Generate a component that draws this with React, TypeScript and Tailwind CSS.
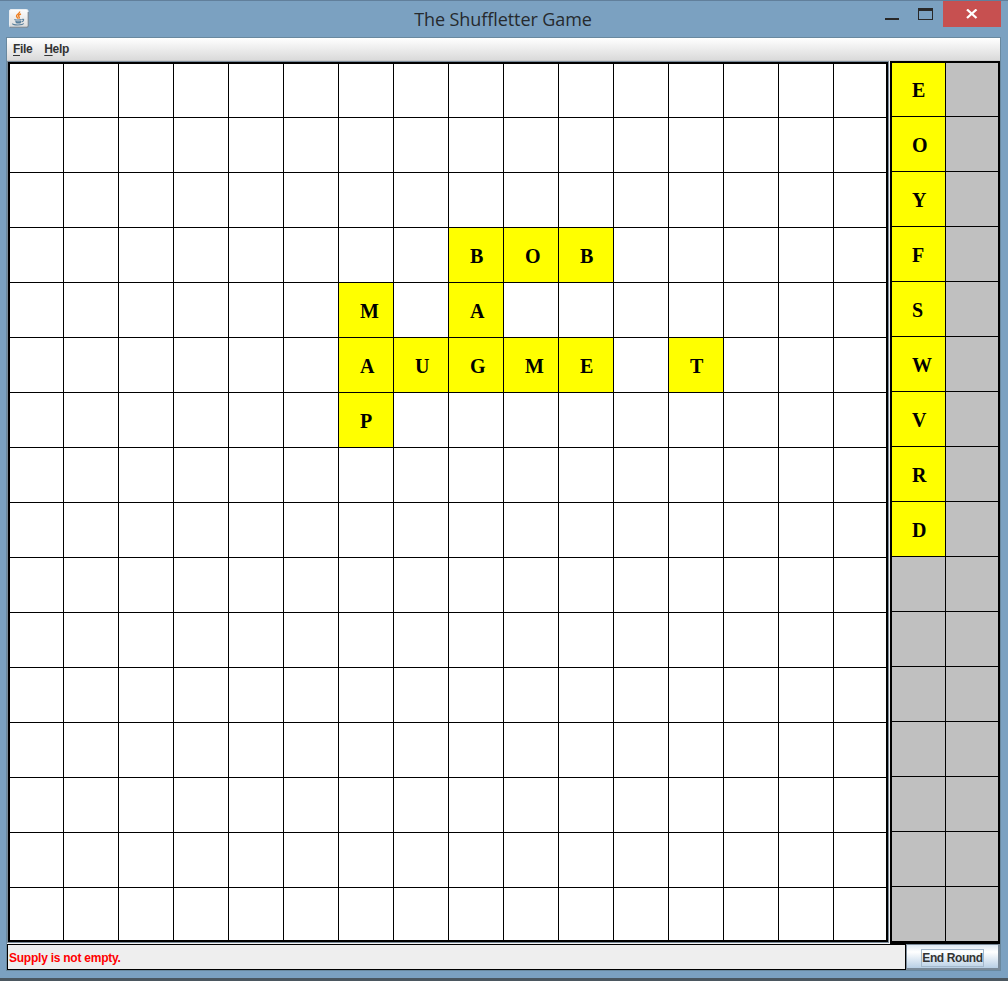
const placed: Record<string, string> = {
  '3-8': 'B', '3-9': 'O', '3-10': 'B',
  '4-6': 'M', '4-8': 'A',
  '5-6': 'A', '5-7': 'U', '5-8': 'G', '5-9': 'M', '5-10': 'E', '5-12': 'T',
  '6-6': 'P',
};

const rack = ['E', 'O', 'Y', 'F', 'S', 'W', 'V', 'R', 'D'];
const range = (n: number) => Array.from({ length: n }, (_, i) => i);

function JavaIcon() {
  return (
    <svg width="20" height="20" viewBox="0 0 20 20" fill="none">
      <defs>
        <linearGradient id="tile" x1="0" y1="0" x2="0" y2="1">
          <stop offset="0" stopColor="#fdfdfd" />
          <stop offset="1" stopColor="#dcdcdc" />
        </linearGradient>
      </defs>
      <rect x="0.5" y="0.5" width="18.5" height="17.6" rx="1.5" fill="url(#tile)" stroke="#e9eef2" />
      <path d="M1 18.2H18.5L19.2 17V3" stroke="#5d6b78" strokeWidth="0.9" />
      <path d="M10.6 2.5C11.3 4.6 7 5.3 7.5 7.2C7.7 8.2 8.7 8.6 8.8 9.6M12 5C9.2 6 9.1 6.9 10 7.7C10.6 8.3 10.3 9 9.8 9.6" stroke="#ee7f22" strokeWidth="1.4" />
      <path d="M5.4 10.4C7 11.2 11.2 11.1 12.6 10.4M6.4 12.2C8 12.9 10.7 12.8 12 12.2M13 10.4C15.4 9.6 15.2 12.1 12.6 12.9M3.4 14.6C3.4 16.4 14 16.4 14.6 14.4M6.7 13.6C8.2 14.1 10.7 14.1 12 13.6" stroke="#587f9c" strokeWidth="1.1" />
    </svg>
  );
}

function TitleBar() {
  return (
    <header className="relative flex h-[37px] shrink-0 items-start border-t border-[#617f9b]">
      <div className="pt-2 pl-[9px]">
        <JavaIcon />
      </div>
      <h1 className="absolute inset-x-0 top-[6px] pr-[2px] text-center font-['Open_Sans','Noto_Sans',sans-serif] text-[18px] leading-6 tracking-[-0.08px] text-[#262a2e]">
        The Shuffletter Game
      </h1>
      <div className="ml-auto flex pr-[7px]">
        <svg width="58" height="26" viewBox="0 0 58 26" shapeRendering="crispEdges">
          <rect x="0" y="17" width="14" height="2" fill="#282828" />
          <path d="M33 7h15v12H33zM34 10v8h13v-8z" fill="#282828" fillRule="evenodd" />
        </svg>
        <div className="flex h-[26px] w-[58px] items-center justify-center bg-[#c75050]">
          <svg width="12" height="10" viewBox="0 0 12 10" className="-ml-px">
            <path d="M1 0.5L10.5 9M10.5 0.5L1 9" stroke="#fff" strokeWidth="2.3" />
          </svg>
        </div>
      </div>
    </header>
  );
}

function MenuBar() {
  return (
    <nav className="flex h-[23px] shrink-0 items-start gap-3 border-b border-[#cccccc] bg-linear-to-b from-white to-[#dadada] pt-[3px] pl-[6px] text-[12px] leading-4 font-bold tracking-[-0.35px] text-[#333]">
      <span><span className="underline underline-offset-2">F</span>ile</span>
      <span><span className="underline underline-offset-2">H</span>elp</span>
    </nav>
  );
}

function Board() {
  return (
    <div className="mt-px ml-px grid h-[880px] w-[880px] shrink-0 grid-cols-[53px_repeat(14,54px)_52px] grid-rows-[53px_repeat(14,54px)_52px] gap-px border-2 border-black bg-black shadow-[0_0_0_1px_#7a8a99]">
      {range(256).map((i) => {
        const letter = placed[`${Math.floor(i / 16)}-${i % 16}`];
        return (
          <div
            key={i}
            className={`pt-[18px] pl-[21px] text-[20px] leading-5 font-bold ${letter ? 'bg-[#ffff00]' : 'bg-white'}`}
          >
            {letter}
          </div>
        );
      })}
    </div>
  );
}

function Rack() {
  return (
    <div className="relative ml-[2px] grid h-[883px] w-[110px] shrink-0 grid-cols-[53px_52px] grid-rows-[53px_repeat(14,54px)_54px] gap-px border-2 border-b-3 border-black bg-black">
      {range(32).map((i) => {
        const letter = i % 2 === 0 ? rack[i / 2] : undefined;
        return (
          <div
            key={i}
            className={`pl-[20px] text-[20px] leading-5 font-bold ${i < 2 ? 'pt-[17px]' : 'pt-[18px]'} ${letter ? 'bg-[#ffff00]' : 'bg-[#c0c0c0]'}`}
          >
            {letter}
          </div>
        );
      })}
    </div>
  );
}

function StatusBar() {
  return (
    <footer className="flex h-[26px] shrink-0 text-[12px] leading-4 font-bold">
      <div className="w-[899px] border border-black bg-[#eeeeee] pt-[5px] pl-px tracking-[-0.24px] text-[#ff0000]">
        Supply is not empty.
      </div>
      <button className="flex w-[94px] items-center justify-center border border-r-2 border-b-2 border-[#7a8a99] bg-linear-to-b from-[#dde8f3] via-white via-30% to-[#b8cfe5] pt-[2px] font-bold tracking-[-0.4px] text-[#333]">
        <span className="border border-[#a3b8cc] leading-4">End Round</span>
      </button>
    </footer>
  );
}

export default function App() {
  return (
    <div className="flex h-[981px] w-[1008px] flex-col overflow-hidden border-b-3 border-[#4b5760] bg-[#7ba1c1] font-['Liberation_Sans',Arial,sans-serif]">
      <TitleBar />
      <main className="mx-[6px] flex h-[934px] w-[995px] shrink-0 flex-col border border-[#69899f]">
        <MenuBar />
        <div className="flex h-[883px] bg-[#f4f4f4] font-['Liberation_Serif','Times_New_Roman',serif] text-black">
          <Board />
          <Rack />
        </div>
        <StatusBar />
      </main>
    </div>
  );
}
